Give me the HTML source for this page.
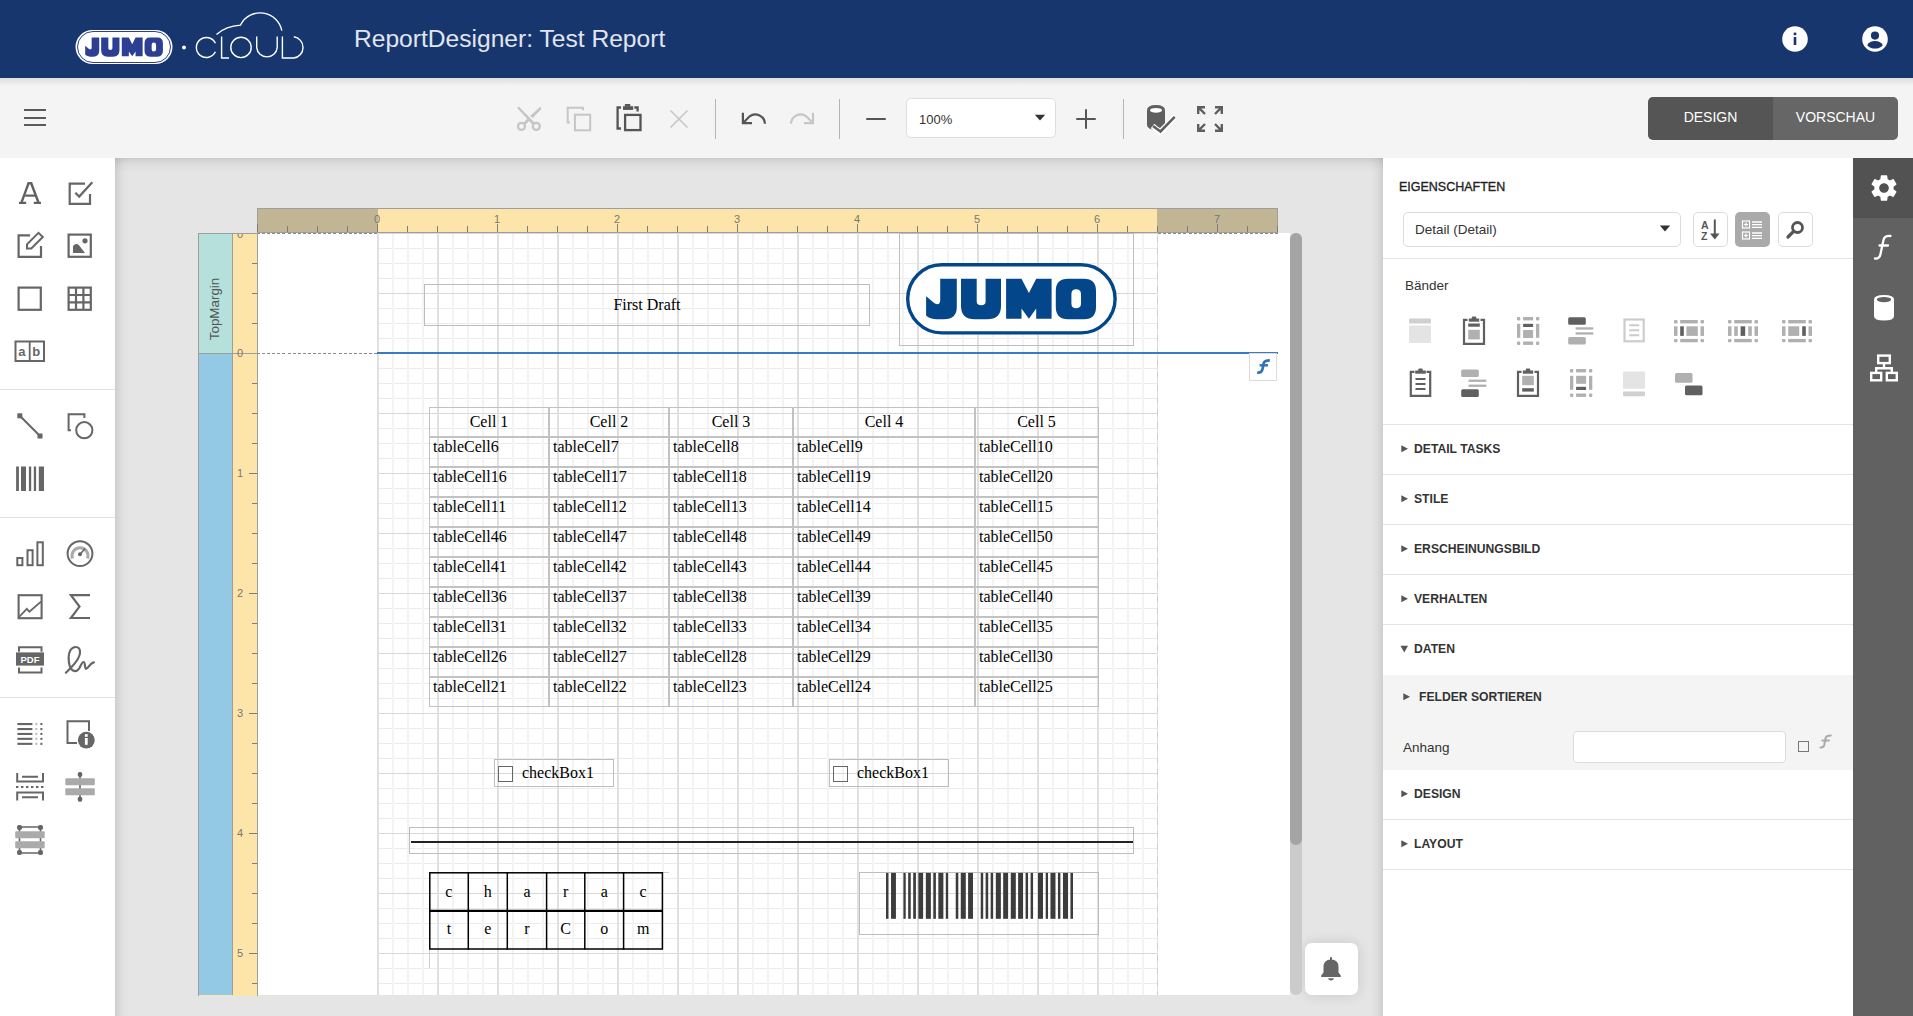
<!DOCTYPE html>
<html><head><meta charset="utf-8">
<style>
*{box-sizing:border-box;margin:0;padding:0}
html,body{width:1913px;height:1016px;overflow:hidden;background:#fff;font-family:"Liberation Sans",sans-serif}
.a{position:absolute}
svg{position:absolute;overflow:visible}
#hdr{left:0;top:0;width:1913px;height:78px;background:#18366e}
#tb{left:0;top:78px;width:1913px;height:80px;background:#f4f4f4}
#tbsh{left:0;top:78px;width:1913px;height:8px;background:linear-gradient(#dedede,#f4f4f4)}
#lt{left:0;top:158px;width:115px;height:858px;background:#fff}
#cv{left:115px;top:158px;width:1268px;height:858px;background:#e5e5e5;overflow:hidden}
#rp{left:1383px;top:158px;width:470px;height:858px;background:#fff}
#rs{left:1853px;top:158px;width:60px;height:858px;background:#616161}
.title{left:354px;top:25px;font-size:24.6px;color:#e1e6ef;white-space:nowrap}
.sep{background:#b4b4b4;width:1px;height:40px;top:99px}
.lsep{left:0;width:115px;height:1px;background:#e2e2e2}
.btn{top:97px;height:43px;color:#fff;font-size:14px;text-align:center;line-height:41px}

.tk{width:1px;background:#7d7d7d}
.vtk{height:1px;background:#7d7d7d}
.rn{width:20px;text-align:center;font-size:11px;color:#777;line-height:14px}
.grid{background-image:linear-gradient(90deg,#e0e0e0 2px,transparent 2px),linear-gradient(#d8d8d8 1px,transparent 1px),linear-gradient(90deg,#f3f3f3 2px,transparent 2px),linear-gradient(#ebebeb 1px,transparent 1px);background-size:60px 60px,60px 60px,15px 15px,15px 15px}

.ctl{border:1px solid #bdbdbd}
.ser{font-family:"Liberation Serif",serif;font-size:16px;color:#000;white-space:nowrap;line-height:18px}
.cell{border:1px solid #c2c2c2}

.sec{font-size:13.5px;font-weight:bold;color:#333;transform:scaleX(0.9);transform-origin:0 0}
.dsh{height:1px;background:repeating-linear-gradient(90deg,#8a8a8a 0 3px,transparent 3px 5.1px)}
</style></head><body>
<div id="hdr" class="a"></div>
<!-- JUMO header logo -->
<svg style="left:75px;top:29px" width="98" height="36" viewBox="0 0 98 36">
  <rect x="0.5" y="1" width="97" height="34" rx="17" fill="#fff"/>
  <rect x="2.5" y="2.5" width="93" height="31" rx="15.5" fill="#fff" stroke="#2c3f93" stroke-width="1"/>
  <g transform="translate(1,1) scale(0.4575,0.4735)" fill="#2c3f93"><path id="jumoL" d="M34.2,15.7H50.8V44Q50.8,56.3 38,56.3H31Q24,56.3 20.1,52.5V33.3L28.5,40.3Q34.2,43 34.2,37Z M55,15.7H70.7V38.5Q70.7,42.3 75.2,42.3Q79.6,42.3 79.6,38.5V15.7H95V43Q95,56.3 81,56.3H69Q55,56.3 55,43Z M100.1,15.7H115.5L122.9,30.1L130.2,15.7H145.6V55.7H130.2V45.4L122.9,55.7L115.5,45.4V55.7H100.1Z M162,15.7H178Q190,15.7 190,28V44Q190,56.3 178,56.3H162Q149.8,56.3 149.8,44V28Q149.8,15.7 162,15.7Z M170,26.2Q165.4,26.2 165.4,31V40.5Q165.4,45.2 170,45.2Q175,45.2 175,40.5V31Q175,26.2 170,26.2Z" fill-rule="evenodd"/></g>
</svg>
<svg style="left:0;top:0" width="320" height="78" viewBox="0 0 320 78" fill="none" stroke="#fff" stroke-width="1.4">
  <circle cx="184" cy="47.5" r="2" fill="#fff" stroke="none"/>
  <path d="M215.4,43.2A10,10 0 1 0 215.4,51.8"/>
  <path d="M221.6,36.6V58H229"/>
  <circle cx="241" cy="47.4" r="10.2"/>
  <path d="M256.7,36.6V47.6A10.3,10.3 0 0 0 277.2,47.6V36.6"/>
  <path d="M282.4,36.6V58H293.8A10.7,10.7 0 0 0 293.8,36.8"/>
  <path d="M216.5,34.4Q226,26 240.5,25.1L240.8,24.5A22,22 0 0 1 281.8,30.6"/>
</svg>
<div class="a title">ReportDesigner: Test Report</div>
<!-- header right icons -->
<svg style="left:1782px;top:26px" width="26" height="26" viewBox="0 0 26 26">
  <circle cx="13" cy="13" r="12.8" fill="#fff"/>
  <rect x="11.7" y="11" width="2.6" height="8" fill="#1a356e"/>
  <rect x="11.7" y="6.6" width="2.6" height="2.6" fill="#1a356e"/>
</svg>
<svg style="left:1862px;top:26px" width="26" height="26" viewBox="0 0 26 26">
  <circle cx="13" cy="13" r="12.8" fill="#fff"/>
  <circle cx="13" cy="9.6" r="4.1" fill="#1a356e"/>
  <path d="M5.2,19.2Q7.5,15 13,15Q18.5,15 20.8,19.2Q18,22.6 13,22.6Q8,22.6 5.2,19.2Z" fill="#1a356e"/>
</svg>

<div id="tb" class="a"></div>
<div id="tbsh" class="a"></div>
<!-- hamburger -->
<div class="a" style="left:24px;top:109px;width:22px;height:2.4px;background:#5a5a5a"></div>
<div class="a" style="left:24px;top:116.5px;width:22px;height:2.4px;background:#5a5a5a"></div>
<div class="a" style="left:24px;top:124px;width:22px;height:2.4px;background:#5a5a5a"></div>
<!-- toolbar icons -->
<svg style="left:516px;top:106px" width="26" height="26" viewBox="0 0 26 26">
  <circle cx="5.5" cy="20.4" r="3.5" fill="none" stroke="#c6c6c6" stroke-width="2.3"/><circle cx="20.3" cy="20.4" r="3.5" fill="none" stroke="#c6c6c6" stroke-width="2.3"/>
  <path d="M1,1.8L2.8,0.4L19.4,17.4L17.2,19.6Z M6.6,17.4L12,12L14,14L8.8,19.6Z M14.2,9.8L24.6,0.6L25.2,3.2L16.6,12.2Z" fill="#c6c6c6"/>
</svg>
<svg style="left:566px;top:106px" width="26" height="26" viewBox="0 0 26 26" fill="none" stroke="#c6c6c6" stroke-width="2">
  <path d="M4,16.5H1.7V1.7H17V4.3"/><rect x="8.9" y="8.7" width="15.3" height="15.6"/>
</svg>
<svg style="left:616px;top:103px" width="27" height="29" viewBox="0 0 27 29">
  <path d="M5,25.5H1.6V4.5H5" fill="none" stroke="#555" stroke-width="2.3"/>
  <rect x="7" y="3.2" width="10.2" height="3.7" fill="#555"/><rect x="8.8" y="1" width="5.6" height="2.6" rx="0.8" fill="#555"/>
  <path d="M18.3,4.5H21.6V8.4" fill="none" stroke="#555" stroke-width="2.3"/>
  <rect x="9.1" y="11.9" width="15.4" height="15.2" fill="none" stroke="#555" stroke-width="2.3"/>
</svg>
<svg style="left:669px;top:109px" width="20" height="20" viewBox="0 0 20 20" fill="none" stroke="#c6c6c6" stroke-width="1.6">
  <path d="M1.5,1.5L18.5,18.5M18.5,1.5L1.5,18.5"/>
</svg>
<div class="a sep" style="left:715px"></div>
<svg style="left:740px;top:111px" width="27" height="15" viewBox="0 0 27 15" fill="none" stroke="#555" stroke-width="2.2">
  <path d="M2.9,1.8V12.2H12"/><path d="M2.9,12.2L9.6,5.3A9.6,9.6 0 0 1 24.9,12.8"/>
</svg>
<svg style="left:789px;top:111px" width="27" height="15" viewBox="0 0 27 15" fill="none" stroke="#c6c6c6" stroke-width="2.2">
  <path d="M24,1.8V12.2H15"/><path d="M24,12.2L17.3,5.3A9.6,9.6 0 0 0 2,12.8"/>
</svg>
<div class="a sep" style="left:839px"></div>
<div class="a" style="left:866px;top:117.6px;width:20px;height:2.4px;background:#555;border-radius:1px"></div>
<div class="a" style="left:906px;top:98px;width:150px;height:40px;background:#fff;border:1px solid #dedede;border-radius:5px"></div>
<div class="a" style="left:919px;top:112px;font-size:13px;color:#333">100%</div>
<svg style="left:1034px;top:114px" width="12" height="8" viewBox="0 0 12 8"><path d="M0.8,0.8H11.2L6,6.5Z" fill="#333"/></svg>
<div class="a" style="left:1076px;top:117.6px;width:20px;height:2.4px;background:#555;border-radius:1px"></div>
<div class="a" style="left:1084.8px;top:108.8px;width:2.4px;height:20px;background:#555;border-radius:1px"></div>
<div class="a sep" style="left:1123px"></div>
<svg style="left:1146px;top:104px" width="32" height="30" viewBox="0 0 32 30">
  <path d="M1,6.5Q1,1 10,1Q19,1 19,6.5V19L14,24L7,21.5L12,26.5Q1,25.5 1,21Z" fill="#5f5f5f"/>
  <ellipse cx="10" cy="6.3" rx="6" ry="2.4" fill="#fff"/>
  <path d="M6.5,22L14.5,28.5L29,12.8" fill="none" stroke="#fff" stroke-width="5.5"/>
  <path d="M7,22L14.5,27.5L28.7,12.8" fill="none" stroke="#5f5f5f" stroke-width="2.6"/>
</svg>
<svg style="left:1197px;top:106px" width="26" height="26" viewBox="0 0 26 26" fill="none" stroke="#5f5f5f" stroke-width="2.4">
  <path d="M1.2,8V1.2H8M1.2,1.2L8,8"/><path d="M18,1.2H24.8V8M24.8,1.2L18,8"/>
  <path d="M1.2,18V24.8H8M1.2,24.8L8,18"/><path d="M18,24.8H24.8V18M24.8,24.8L18,18"/>
</svg>
<!-- design/preview -->
<div class="a btn" style="left:1648px;width:125px;background:#555;border-radius:5px 0 0 5px">DESIGN</div>
<div class="a btn" style="left:1773px;width:125px;background:#666;border-radius:0 5px 5px 0">VORSCHAU</div>

<div id="lt" class="a"></div>

<!-- LEFT TOOLBOX -->
<div class="a lsep" style="top:389px"></div>
<div class="a lsep" style="top:517px"></div>
<div class="a lsep" style="top:697px"></div>
<svg style="left:14px;top:176px" width="34" height="32" viewBox="14 176 34 32" fill="none" stroke="#616161" stroke-width="2.3">
<path d="M21.6,202.2L28.6,183.2M38.4,202.2L31.2,183.2" stroke-width="2.4"/><path d="M27.6,183.2H32.2" stroke-width="2.3"/><path d="M25.2,195.6H35" stroke-width="2.2"/><path d="M19,202.9H26.2M33.8,202.9H41" stroke-width="2.1"/></svg>
<svg style="left:68px;top:181px" width="26" height="24" viewBox="0 0 26 24" fill="none" stroke="#666" stroke-width="2.2">
  <path d="M22,13V22.8H1.7V2.6H17"/><path d="M7.3,11.8L11.2,15.6L24.3,1.2"/>
</svg>
<svg style="left:17px;top:231px" width="29" height="28" viewBox="0 0 29 28" fill="none" stroke="#666" stroke-width="2.2">
  <path d="M24,15V25.9H1.6V4.3H13"/><path d="M10,17.5V13.3L21.5,1.8L25.8,6L14.3,17.5Z" stroke-width="2"/>
</svg>
<svg style="left:67px;top:233px" width="26" height="26" viewBox="0 0 26 26">
  <rect x="1.6" y="1.6" width="22.2" height="22.2" fill="none" stroke="#666" stroke-width="2.2"/>
  <path d="M6,20H18L12,12.2Q9,9.5 6,13Z" fill="#666"/><circle cx="18" cy="7.8" r="2.6" fill="#666"/>
</svg>
<svg style="left:17px;top:286px" width="26" height="26" viewBox="0 0 26 26"><rect x="1.6" y="1.6" width="22.2" height="22.2" fill="none" stroke="#666" stroke-width="2.2"/></svg>
<svg style="left:67px;top:286px" width="26" height="26" viewBox="0 0 26 26" fill="none" stroke="#666" stroke-width="2.2">
  <rect x="1.6" y="1.6" width="22.2" height="22.2"/><path d="M9,1.6V23.8M16.4,1.6V23.8M1.6,9H23.8M1.6,16.4H23.8"/>
</svg>
<svg style="left:14px;top:340px" width="32" height="23" viewBox="0 0 32 23">
  <rect x="1.5" y="1.5" width="28.5" height="19.5" fill="none" stroke="#666" stroke-width="2"/><path d="M15.7,1.5V21" stroke="#666" stroke-width="1.8"/>
  <text x="4.3" y="16.3" font-family="Liberation Sans" font-weight="bold" font-size="13" fill="#666">a</text>
  <text x="18.2" y="16.3" font-family="Liberation Sans" font-weight="bold" font-size="13" fill="#666">b</text>
</svg>
<svg style="left:16px;top:413px" width="28" height="28" viewBox="0 0 28 28">
  <path d="M3.8,2.8L24,23" stroke="#666" stroke-width="2"/><rect x="1.3" y="0.3" width="5" height="5" fill="#666"/><rect x="21.5" y="20.5" width="5" height="5" fill="#666"/>
</svg>
<svg style="left:66px;top:412px" width="30" height="30" viewBox="0 0 30 30" fill="none" stroke="#666" stroke-width="2">
  <path d="M5,18.2H2.6V2.3H18.4V6"/><circle cx="18.3" cy="18.2" r="8.1"/>
</svg>
<svg style="left:16px;top:466px" width="29" height="26" viewBox="0 0 29 26" fill="#666">
  <rect x="0.1" y="0.5" width="2.8" height="24.5"/><rect x="5" y="0.5" width="5" height="24.5"/><rect x="12.9" y="0.5" width="2.3" height="24.5"/><rect x="17.8" y="0.5" width="2.3" height="24.5"/><rect x="22.8" y="0.5" width="5.2" height="24.5"/>
</svg>
<svg style="left:15px;top:540px" width="30" height="28" viewBox="0 0 30 28" fill="none" stroke="#666" stroke-width="2">
  <rect x="2.3" y="18" width="5.1" height="7.2"/><rect x="12.5" y="10.2" width="5.1" height="15"/><rect x="22.4" y="2.3" width="5.4" height="22.9"/>
</svg>
<svg style="left:65px;top:539px" width="30" height="30" viewBox="0 0 30 30">
  <circle cx="15" cy="14.6" r="12.4" fill="none" stroke="#666" stroke-width="2"/>
  <path d="M7.5,19.5A8,8 0 1 1 22.5,19.5" fill="none" stroke="#aaa" stroke-width="3"/>
  <circle cx="15" cy="15.3" r="2" fill="#666"/><path d="M15,15.3L20.2,9.5" stroke="#666" stroke-width="1.6"/>
</svg>
<svg style="left:16px;top:593px" width="28" height="28" viewBox="0 0 28 28" fill="none" stroke="#666" stroke-width="2">
  <rect x="2.6" y="2.2" width="23" height="23" stroke-width="2.1"/><path d="M2.6,24.5L10.8,15.8L13.4,18.8L25,8.6" stroke-width="1.8"/>
</svg>
<svg style="left:69px;top:594px" width="22" height="26" viewBox="0 0 22 26" fill="none" stroke="#666" stroke-width="2.2">
  <path d="M21,1.2H1.9L10.5,12.6L1.9,24H21" stroke-linejoin="miter"/>
</svg>
<svg style="left:15px;top:646px" width="30" height="28" viewBox="0 0 30 28">
  <path d="M4,5.8V1.2H26.5V5.8M4,21.6V26.6H26.5V21.6" fill="none" stroke="#666" stroke-width="2"/>
  <rect x="1" y="6.4" width="28" height="13.2" fill="#666"/>
  <text x="15" y="17" text-anchor="middle" font-family="Liberation Sans" font-weight="bold" font-size="9.5" fill="#fff">PDF</text>
</svg>
<svg style="left:60px;top:640px" width="40" height="40" viewBox="0 0 40 40" fill="none" stroke="#666" stroke-width="2.2" stroke-linecap="round">
  <path d="M5.9,32.7L10.8,27.8C14,24.5 19.5,19 20,13C20.3,8.5 18.5,7 15.8,7C11,7 8.5,12 8.6,18C8.7,24 10.5,29 13,30.5C16,32 18,30.5 19.5,28C21,25 22,22 23.6,22C25.5,22 24.5,28.5 26,28.8C28,29 30,23 33.9,22.3"/>
</svg>
<svg style="left:16px;top:722px" width="28" height="24" viewBox="0 0 28 24">
  <g fill="#666"><rect x="1.4" y="1" width="15" height="2.1"/><rect x="1.4" y="6" width="15" height="2.1"/><rect x="1.4" y="10.9" width="15" height="2.1"/><rect x="1.4" y="15.8" width="15" height="2.1"/><rect x="1.4" y="20.8" width="15" height="2.1"/>
  <rect x="24.4" y="1" width="2" height="2.1"/><rect x="24.4" y="6" width="2" height="2.1"/><rect x="24.4" y="10.9" width="2" height="2.1"/><rect x="24.4" y="15.8" width="2" height="2.1"/><rect x="24.4" y="20.8" width="2" height="2.1"/></g>
  <g fill="#bbb"><rect x="19.3" y="1" width="2" height="2.1"/><rect x="19.3" y="6" width="2" height="2.1"/><rect x="19.3" y="10.9" width="2" height="2.1"/><rect x="19.3" y="15.8" width="2" height="2.1"/><rect x="19.3" y="20.8" width="2" height="2.1"/></g>
</svg>
<svg style="left:65px;top:719px" width="32" height="32" viewBox="0 0 32 32">
  <path d="M12,24H2.5V2.3H24V12" fill="none" stroke="#666" stroke-width="2"/>
  <circle cx="21.3" cy="21.2" r="8.4" fill="#666"/>
  <rect x="19.9" y="19" width="2.8" height="6.8" fill="#fff"/><rect x="19.9" y="15.2" width="2.8" height="2.6" fill="#fff"/>
</svg>
<svg style="left:15px;top:772px" width="30" height="30" viewBox="0 0 30 30" fill="none" stroke="#666" stroke-width="2">
  <path d="M2.2,1V9.5H28V1M2.2,28.5V20.5H28V28.5"/><path d="M7,4.8H23M7,25.3H23"/>
  <path d="M1,15H29" stroke-dasharray="2.4,2.6" stroke-width="1.8"/>
</svg>
<svg style="left:64px;top:771px" width="32" height="32" viewBox="0 0 32 32">
  <path d="M16,3V29" stroke="#666" stroke-width="1.6"/><rect x="13.7" y="1" width="4.6" height="5" rx="2" fill="#666"/><rect x="13.7" y="25.8" width="4.6" height="5" rx="2" fill="#666"/>
  <rect x="1.3" y="7.2" width="29.5" height="7" rx="1" fill="#aaa"/><rect x="1.3" y="17.2" width="29.5" height="7" rx="1" fill="#aaa"/>
</svg>
<svg style="left:14px;top:824px" width="32" height="32" viewBox="0 0 32 32">
  <path d="M5.5,3V29M26.5,3V29M5.5,3H26.5M5.5,29H26.5" stroke="#666" stroke-width="1.6"/>
  <rect x="1.2" y="7.2" width="29.5" height="7" rx="1" fill="#aaa"/><rect x="1.2" y="17.2" width="29.5" height="7" rx="1" fill="#aaa"/>
  <rect x="3" y="1" width="5" height="5" rx="2" fill="#666"/><rect x="24" y="1" width="5" height="5" rx="2" fill="#666"/>
  <rect x="3" y="26" width="5" height="5" rx="2" fill="#666"/><rect x="24" y="26" width="5" height="5" rx="2" fill="#666"/>
</svg>
<div id="cv" class="a"></div>

<div class="a" id="cvsh" style="left:115px;top:158px;width:1268px;height:858px;box-shadow:inset 0 14px 14px -14px rgba(0,0,0,0.22),inset 14px 0 14px -14px rgba(0,0,0,0.2),inset -14px 0 14px -14px rgba(0,0,0,0.2)"></div>
<!-- page -->
<div class="a" style="left:257px;top:233px;width:1033px;height:762px;background:#fff"></div>
<div class="a grid" style="left:377px;top:233px;width:781px;height:120px"></div>
<div class="a grid" style="left:377px;top:353px;width:781px;height:642px"></div>
<div class="a" style="left:1157px;top:235.5px;width:1px;height:759.5px;background:repeating-linear-gradient(#cdcdcd 0 6px,transparent 6px 12.4px)"></div>
<div class="a dsh" style="left:257px;top:233px;width:120px"></div>
<div class="a dsh" style="left:1158px;top:233px;width:120px"></div>
<div class="a dsh" style="left:257px;top:353px;width:120px"></div>
<div class="a dsh" style="left:1158px;top:353px;width:120px"></div>
<div class="a" style="left:377px;top:352px;width:901px;height:1.5px;background:#3a7bbf"></div>
<!-- top ruler -->
<div class="a" style="left:257px;top:208px;width:1021px;height:25px;background:#c1b594;border:1px solid #9e9e9e"></div>
<div class="a" style="left:378px;top:209px;width:779px;height:23px;background:#fde5a9"></div>
<div class="a tk" style="left:257px;top:224px;height:8px"></div>
<div class="a tk" style="left:287px;top:226px;height:6px"></div>
<div class="a tk" style="left:317px;top:226px;height:6px"></div>
<div class="a tk" style="left:347px;top:226px;height:6px"></div>
<div class="a tk" style="left:377px;top:224px;height:8px"></div>
<div class="a tk" style="left:407px;top:226px;height:6px"></div>
<div class="a tk" style="left:437px;top:226px;height:6px"></div>
<div class="a tk" style="left:467px;top:226px;height:6px"></div>
<div class="a tk" style="left:497px;top:224px;height:8px"></div>
<div class="a tk" style="left:527px;top:226px;height:6px"></div>
<div class="a tk" style="left:557px;top:226px;height:6px"></div>
<div class="a tk" style="left:587px;top:226px;height:6px"></div>
<div class="a tk" style="left:617px;top:224px;height:8px"></div>
<div class="a tk" style="left:647px;top:226px;height:6px"></div>
<div class="a tk" style="left:677px;top:226px;height:6px"></div>
<div class="a tk" style="left:707px;top:226px;height:6px"></div>
<div class="a tk" style="left:737px;top:224px;height:8px"></div>
<div class="a tk" style="left:767px;top:226px;height:6px"></div>
<div class="a tk" style="left:797px;top:226px;height:6px"></div>
<div class="a tk" style="left:827px;top:226px;height:6px"></div>
<div class="a tk" style="left:857px;top:224px;height:8px"></div>
<div class="a tk" style="left:887px;top:226px;height:6px"></div>
<div class="a tk" style="left:917px;top:226px;height:6px"></div>
<div class="a tk" style="left:947px;top:226px;height:6px"></div>
<div class="a tk" style="left:977px;top:224px;height:8px"></div>
<div class="a tk" style="left:1007px;top:226px;height:6px"></div>
<div class="a tk" style="left:1037px;top:226px;height:6px"></div>
<div class="a tk" style="left:1067px;top:226px;height:6px"></div>
<div class="a tk" style="left:1097px;top:224px;height:8px"></div>
<div class="a tk" style="left:1127px;top:226px;height:6px"></div>
<div class="a tk" style="left:1157px;top:226px;height:6px"></div>
<div class="a tk" style="left:1187px;top:226px;height:6px"></div>
<div class="a tk" style="left:1217px;top:224px;height:8px"></div>
<div class="a tk" style="left:1247px;top:226px;height:6px"></div>
<div class="a tk" style="left:1277px;top:226px;height:6px"></div>
<div class="a rn" style="left:367px;top:212px">0</div>
<div class="a rn" style="left:487px;top:212px">1</div>
<div class="a rn" style="left:607px;top:212px">2</div>
<div class="a rn" style="left:727px;top:212px">3</div>
<div class="a rn" style="left:847px;top:212px">4</div>
<div class="a rn" style="left:967px;top:212px">5</div>
<div class="a rn" style="left:1087px;top:212px">6</div>
<div class="a rn" style="left:1207px;top:212px">7</div>
<!-- band strip -->
<div class="a" style="left:198px;top:233px;width:60px;height:763px;background:#fde5a9;border:1px solid #9e9e9e;border-bottom:none"></div>
<div class="a" style="left:199px;top:234px;width:34px;height:119px;background:#b5e0dc;border-right:1px solid #9e9e9e"></div>
<div class="a" style="left:199px;top:353px;width:34px;height:642px;background:#94c9e6;border-right:1px solid #9e9e9e;border-top:1px solid #9e9e9e"></div>
<div class="a" style="left:232px;top:353px;width:25px;height:1px;background:#9e9e9e"></div>
<div class="a" style="left:155px;top:301px;width:120px;height:16px;transform:rotate(-90deg);font-size:13.4px;color:#555;text-align:center;line-height:16px">TopMargin</div>
<div class="a vtk" style="top:263px;left:252px;width:5px"></div>
<div class="a vtk" style="top:293px;left:252px;width:5px"></div>
<div class="a vtk" style="top:323px;left:252px;width:5px"></div>
<div class="a vtk" style="top:383px;left:252px;width:5px"></div>
<div class="a vtk" style="top:413px;left:252px;width:5px"></div>
<div class="a vtk" style="top:443px;left:252px;width:5px"></div>
<div class="a vtk" style="top:473px;left:249px;width:8px"></div>
<div class="a vtk" style="top:503px;left:252px;width:5px"></div>
<div class="a vtk" style="top:533px;left:252px;width:5px"></div>
<div class="a vtk" style="top:563px;left:252px;width:5px"></div>
<div class="a vtk" style="top:593px;left:249px;width:8px"></div>
<div class="a vtk" style="top:623px;left:252px;width:5px"></div>
<div class="a vtk" style="top:653px;left:252px;width:5px"></div>
<div class="a vtk" style="top:683px;left:252px;width:5px"></div>
<div class="a vtk" style="top:713px;left:249px;width:8px"></div>
<div class="a vtk" style="top:743px;left:252px;width:5px"></div>
<div class="a vtk" style="top:773px;left:252px;width:5px"></div>
<div class="a vtk" style="top:803px;left:252px;width:5px"></div>
<div class="a vtk" style="top:833px;left:249px;width:8px"></div>
<div class="a vtk" style="top:863px;left:252px;width:5px"></div>
<div class="a vtk" style="top:893px;left:252px;width:5px"></div>
<div class="a vtk" style="top:923px;left:252px;width:5px"></div>
<div class="a vtk" style="top:953px;left:249px;width:8px"></div>
<div class="a vtk" style="top:983px;left:252px;width:5px"></div>
<div class="a rn" style="left:230px;top:466px">1</div>
<div class="a rn" style="left:230px;top:586px">2</div>
<div class="a rn" style="left:230px;top:706px">3</div>
<div class="a rn" style="left:230px;top:826px">4</div>
<div class="a rn" style="left:230px;top:946px">5</div>
<div class="a rn" style="left:230px;top:234px;height:6px;overflow:hidden;line-height:14px"><span style="position:relative;top:-7.5px">0</span></div>
<div class="a rn" style="left:230px;top:346px">0</div>
<div class="a ctl" style="left:424px;top:284px;width:446px;height:42px"></div>
<div class="a ser" style="left:424px;top:296px;width:446px;text-align:center">First Draft</div>
<div class="a ctl" style="left:899px;top:233px;width:235px;height:113px"></div>
<svg style="left:906px;top:262.5px" width="211" height="72" viewBox="0 0 211 72">
<rect x="1.7" y="1.7" width="207.4" height="68.2" rx="34.1" fill="#fff" stroke="#03478a" stroke-width="3.4"/>
<path fill="#03478a" fill-rule="evenodd" d="M34.2,15.7H50.8V44Q50.8,56.3 38,56.3H31Q24,56.3 20.1,52.5V33.3L28.5,40.3Q34.2,43 34.2,37Z M55,15.7H70.7V38.5Q70.7,42.3 75.2,42.3Q79.6,42.3 79.6,38.5V15.7H95V43Q95,56.3 81,56.3H69Q55,56.3 55,43Z M100.1,15.7H115.5L122.9,30.1L130.2,15.7H145.6V55.7H130.2V45.4L122.9,55.7L115.5,45.4V55.7H100.1Z M162,15.7H178Q190,15.7 190,28V44Q190,56.3 178,56.3H162Q149.8,56.3 149.8,44V28Q149.8,15.7 162,15.7Z M170,26.2Q165.4,26.2 165.4,31V40.5Q165.4,45.2 170,45.2Q175,45.2 175,40.5V31Q175,26.2 170,26.2Z"/>
</svg>
<div class="a" style="left:1249px;top:353px;width:28px;height:28px;border:1px solid #dcdcdc;background:#fff"></div>
<svg style="left:1255px;top:358px" width="17" height="17" viewBox="0 0 17 17" fill="none" stroke="#2f73b5" stroke-width="2.7">
<path d="M2.2,14.6Q6.6,15 7.4,11.5L8.7,5.2Q9.4,2.3 14.8,2.3"/><path d="M4.6,7.3H13" stroke-width="2.4"/></svg>
<div class="a cell" style="left:429px;top:407px;width:120px;height:30px"></div>
<div class="a ser" style="left:429px;top:413px;width:120px;text-align:center">Cell 1</div>
<div class="a cell" style="left:549px;top:407px;width:120px;height:30px"></div>
<div class="a ser" style="left:549px;top:413px;width:120px;text-align:center">Cell 2</div>
<div class="a cell" style="left:669px;top:407px;width:124px;height:30px"></div>
<div class="a ser" style="left:669px;top:413px;width:124px;text-align:center">Cell 3</div>
<div class="a cell" style="left:793px;top:407px;width:182px;height:30px"></div>
<div class="a ser" style="left:793px;top:413px;width:182px;text-align:center">Cell 4</div>
<div class="a cell" style="left:975px;top:407px;width:124px;height:30px"></div>
<div class="a ser" style="left:975px;top:413px;width:123px;text-align:center">Cell 5</div>
<div class="a cell" style="left:429px;top:437px;width:120px;height:30px"></div>
<div class="a ser" style="left:433px;top:438px">tableCell6</div>
<div class="a cell" style="left:549px;top:437px;width:120px;height:30px"></div>
<div class="a ser" style="left:553px;top:438px">tableCell7</div>
<div class="a cell" style="left:669px;top:437px;width:124px;height:30px"></div>
<div class="a ser" style="left:673px;top:438px">tableCell8</div>
<div class="a cell" style="left:793px;top:437px;width:182px;height:30px"></div>
<div class="a ser" style="left:797px;top:438px">tableCell9</div>
<div class="a cell" style="left:975px;top:437px;width:124px;height:30px"></div>
<div class="a ser" style="left:979px;top:438px">tableCell10</div>
<div class="a cell" style="left:429px;top:467px;width:120px;height:30px"></div>
<div class="a ser" style="left:433px;top:468px">tableCell16</div>
<div class="a cell" style="left:549px;top:467px;width:120px;height:30px"></div>
<div class="a ser" style="left:553px;top:468px">tableCell17</div>
<div class="a cell" style="left:669px;top:467px;width:124px;height:30px"></div>
<div class="a ser" style="left:673px;top:468px">tableCell18</div>
<div class="a cell" style="left:793px;top:467px;width:182px;height:30px"></div>
<div class="a ser" style="left:797px;top:468px">tableCell19</div>
<div class="a cell" style="left:975px;top:467px;width:124px;height:30px"></div>
<div class="a ser" style="left:979px;top:468px">tableCell20</div>
<div class="a cell" style="left:429px;top:497px;width:120px;height:30px"></div>
<div class="a ser" style="left:433px;top:498px">tableCell11</div>
<div class="a cell" style="left:549px;top:497px;width:120px;height:30px"></div>
<div class="a ser" style="left:553px;top:498px">tableCell12</div>
<div class="a cell" style="left:669px;top:497px;width:124px;height:30px"></div>
<div class="a ser" style="left:673px;top:498px">tableCell13</div>
<div class="a cell" style="left:793px;top:497px;width:182px;height:30px"></div>
<div class="a ser" style="left:797px;top:498px">tableCell14</div>
<div class="a cell" style="left:975px;top:497px;width:124px;height:30px"></div>
<div class="a ser" style="left:979px;top:498px">tableCell15</div>
<div class="a cell" style="left:429px;top:527px;width:120px;height:30px"></div>
<div class="a ser" style="left:433px;top:528px">tableCell46</div>
<div class="a cell" style="left:549px;top:527px;width:120px;height:30px"></div>
<div class="a ser" style="left:553px;top:528px">tableCell47</div>
<div class="a cell" style="left:669px;top:527px;width:124px;height:30px"></div>
<div class="a ser" style="left:673px;top:528px">tableCell48</div>
<div class="a cell" style="left:793px;top:527px;width:182px;height:30px"></div>
<div class="a ser" style="left:797px;top:528px">tableCell49</div>
<div class="a cell" style="left:975px;top:527px;width:124px;height:30px"></div>
<div class="a ser" style="left:979px;top:528px">tableCell50</div>
<div class="a cell" style="left:429px;top:557px;width:120px;height:30px"></div>
<div class="a ser" style="left:433px;top:558px">tableCell41</div>
<div class="a cell" style="left:549px;top:557px;width:120px;height:30px"></div>
<div class="a ser" style="left:553px;top:558px">tableCell42</div>
<div class="a cell" style="left:669px;top:557px;width:124px;height:30px"></div>
<div class="a ser" style="left:673px;top:558px">tableCell43</div>
<div class="a cell" style="left:793px;top:557px;width:182px;height:30px"></div>
<div class="a ser" style="left:797px;top:558px">tableCell44</div>
<div class="a cell" style="left:975px;top:557px;width:124px;height:30px"></div>
<div class="a ser" style="left:979px;top:558px">tableCell45</div>
<div class="a cell" style="left:429px;top:587px;width:120px;height:30px"></div>
<div class="a ser" style="left:433px;top:588px">tableCell36</div>
<div class="a cell" style="left:549px;top:587px;width:120px;height:30px"></div>
<div class="a ser" style="left:553px;top:588px">tableCell37</div>
<div class="a cell" style="left:669px;top:587px;width:124px;height:30px"></div>
<div class="a ser" style="left:673px;top:588px">tableCell38</div>
<div class="a cell" style="left:793px;top:587px;width:182px;height:30px"></div>
<div class="a ser" style="left:797px;top:588px">tableCell39</div>
<div class="a cell" style="left:975px;top:587px;width:124px;height:30px"></div>
<div class="a ser" style="left:979px;top:588px">tableCell40</div>
<div class="a cell" style="left:429px;top:617px;width:120px;height:30px"></div>
<div class="a ser" style="left:433px;top:618px">tableCell31</div>
<div class="a cell" style="left:549px;top:617px;width:120px;height:30px"></div>
<div class="a ser" style="left:553px;top:618px">tableCell32</div>
<div class="a cell" style="left:669px;top:617px;width:124px;height:30px"></div>
<div class="a ser" style="left:673px;top:618px">tableCell33</div>
<div class="a cell" style="left:793px;top:617px;width:182px;height:30px"></div>
<div class="a ser" style="left:797px;top:618px">tableCell34</div>
<div class="a cell" style="left:975px;top:617px;width:124px;height:30px"></div>
<div class="a ser" style="left:979px;top:618px">tableCell35</div>
<div class="a cell" style="left:429px;top:647px;width:120px;height:30px"></div>
<div class="a ser" style="left:433px;top:648px">tableCell26</div>
<div class="a cell" style="left:549px;top:647px;width:120px;height:30px"></div>
<div class="a ser" style="left:553px;top:648px">tableCell27</div>
<div class="a cell" style="left:669px;top:647px;width:124px;height:30px"></div>
<div class="a ser" style="left:673px;top:648px">tableCell28</div>
<div class="a cell" style="left:793px;top:647px;width:182px;height:30px"></div>
<div class="a ser" style="left:797px;top:648px">tableCell29</div>
<div class="a cell" style="left:975px;top:647px;width:124px;height:30px"></div>
<div class="a ser" style="left:979px;top:648px">tableCell30</div>
<div class="a cell" style="left:429px;top:677px;width:120px;height:30px"></div>
<div class="a ser" style="left:433px;top:678px">tableCell21</div>
<div class="a cell" style="left:549px;top:677px;width:120px;height:30px"></div>
<div class="a ser" style="left:553px;top:678px">tableCell22</div>
<div class="a cell" style="left:669px;top:677px;width:124px;height:30px"></div>
<div class="a ser" style="left:673px;top:678px">tableCell23</div>
<div class="a cell" style="left:793px;top:677px;width:182px;height:30px"></div>
<div class="a ser" style="left:797px;top:678px">tableCell24</div>
<div class="a cell" style="left:975px;top:677px;width:124px;height:30px"></div>
<div class="a ser" style="left:979px;top:678px">tableCell25</div>
<div class="a ctl" style="left:494px;top:759px;width:120px;height:28px"></div>
<div class="a" style="left:498px;top:766px;width:15px;height:16px;border:1.5px solid #666"></div>
<div class="a ser" style="left:522px;top:764px">checkBox1</div>
<div class="a ctl" style="left:829px;top:759px;width:120px;height:28px"></div>
<div class="a" style="left:833px;top:766px;width:15px;height:16px;border:1.5px solid #666"></div>
<div class="a ser" style="left:857px;top:764px">checkBox1</div>
<div class="a ctl" style="left:409px;top:827px;width:725px;height:27px"></div>
<div class="a" style="left:411px;top:841px;width:722px;height:1.5px;background:#222"></div>
<div class="a" style="left:429px;top:872px;width:240px;height:1px;background:#ccc"></div>
<div class="a" style="left:429px;top:872px;width:1px;height:96px;background:#ccc"></div>
<svg style="left:0;top:0" width="1" height="1"></svg>
<svg style="left:420px;top:865px" width="260" height="95" viewBox="420 865 260 95" stroke="#000" stroke-width="1.5" fill="none"><rect x="429.8" y="872.8" width="232.6" height="76.2" stroke-width="1.5"/><path d="M468.3,872V949.6"/><path d="M507.3,872V949.6"/><path d="M546.6,872V949.6"/><path d="M584.8,872V949.6"/><path d="M623.6,872V949.6"/><path d="M429,910.8H663" stroke-width="2.2"/></svg>
<div class="a ser" style="left:429.5px;top:882.8px;width:38.8px;text-align:center">c</div>
<div class="a ser" style="left:468.3px;top:882.8px;width:39.0px;text-align:center">h</div>
<div class="a ser" style="left:507.3px;top:882.8px;width:39.3px;text-align:center">a</div>
<div class="a ser" style="left:546.6px;top:882.8px;width:38.2px;text-align:center">r</div>
<div class="a ser" style="left:584.8px;top:882.8px;width:38.8px;text-align:center">a</div>
<div class="a ser" style="left:623.6px;top:882.8px;width:39.1px;text-align:center">c</div>
<div class="a ser" style="left:429.5px;top:919.7px;width:38.8px;text-align:center">t</div>
<div class="a ser" style="left:468.3px;top:919.7px;width:39.0px;text-align:center">e</div>
<div class="a ser" style="left:507.3px;top:919.7px;width:39.3px;text-align:center">r</div>
<div class="a ser" style="left:546.6px;top:919.7px;width:38.2px;text-align:center">C</div>
<div class="a ser" style="left:584.8px;top:919.7px;width:38.8px;text-align:center">o</div>
<div class="a ser" style="left:623.6px;top:919.7px;width:39.1px;text-align:center">m</div>
<div class="a ctl" style="left:859px;top:872px;width:240px;height:63px"></div>
<svg style="left:850px;top:862px" width="260" height="83" viewBox="0 0 260 83" fill="#3c3c3c"><rect x="36.02" y="10.9" width="2.45" height="45.9"/><rect x="41.04" y="10.9" width="4.89" height="45.9"/><rect x="53.41" y="10.9" width="2.31" height="45.9"/><rect x="58.17" y="10.9" width="2.58" height="45.9"/><rect x="63.20" y="10.9" width="2.72" height="45.9"/><rect x="68.36" y="10.9" width="4.76" height="45.9"/><rect x="75.84" y="10.9" width="5.03" height="45.9"/><rect x="83.31" y="10.9" width="2.58" height="45.9"/><rect x="88.34" y="10.9" width="5.03" height="45.9"/><rect x="95.81" y="10.9" width="2.31" height="45.9"/><rect x="105.74" y="10.9" width="2.58" height="45.9"/><rect x="110.76" y="10.9" width="5.03" height="45.9"/><rect x="118.10" y="10.9" width="4.89" height="45.9"/><rect x="130.74" y="10.9" width="2.45" height="45.9"/><rect x="135.63" y="10.9" width="2.58" height="45.9"/><rect x="140.66" y="10.9" width="2.45" height="45.9"/><rect x="145.83" y="10.9" width="5.03" height="45.9"/><rect x="153.17" y="10.9" width="4.89" height="45.9"/><rect x="160.78" y="10.9" width="5.03" height="45.9"/><rect x="168.12" y="10.9" width="4.89" height="45.9"/><rect x="175.59" y="10.9" width="2.45" height="45.9"/><rect x="180.62" y="10.9" width="2.45" height="45.9"/><rect x="187.96" y="10.9" width="5.03" height="45.9"/><rect x="195.71" y="10.9" width="2.31" height="45.9"/><rect x="200.46" y="10.9" width="5.03" height="45.9"/><rect x="207.94" y="10.9" width="2.45" height="45.9"/><rect x="212.97" y="10.9" width="5.03" height="45.9"/><rect x="220.44" y="10.9" width="2.58" height="45.9"/></svg>
<div class="a" style="left:1305px;top:943px;width:53px;height:52px;background:#fff;border-radius:7px;box-shadow:0 0 14px rgba(0,0,0,0.13)"></div>
<svg style="left:1319px;top:956px" width="24" height="26" viewBox="0 0 24 26" fill="#666">
<rect x="11" y="1.2" width="2" height="3"/><path d="M2.2,19.5L4.5,16.5V11Q4.5,3.5 12,3.5Q19.5,3.5 19.5,11V16.5L21.8,19.5V21H2.2Z"/><path d="M9,22.2H15Q14.5,24.5 12,24.5Q9.5,24.5 9,22.2Z"/></svg>
<!-- scrollbar -->
<div class="a" style="left:1290px;top:233px;width:12px;height:762px;background:#cbcbcb;border-radius:6px"></div>
<div class="a" style="left:1290px;top:233px;width:12px;height:612px;background:#a4a4a4;border-radius:6px"></div>
<div id="rp" class="a"></div>
<div id="rs" class="a"></div>
<div class="a" style="left:1399px;top:179px;font-size:13.5px;color:#222;-webkit-text-stroke:0.35px #222;transform:scaleX(0.925);transform-origin:0 0">EIGENSCHAFTEN</div>
<div class="a" style="left:1403px;top:212px;width:278px;height:35px;border:1px solid #dcdcdc;border-radius:5px"></div>
<div class="a" style="left:1415px;top:222px;font-size:13.5px;color:#333">Detail (Detail)</div>
<svg style="left:1659px;top:225px" width="12" height="7" viewBox="0 0 12 7"><path d="M0.8,0.5H11.2L6,6.5Z" fill="#333"/></svg>
<div class="a" style="left:1693px;top:212px;width:35px;height:35px;border:1px solid #dcdcdc;border-radius:5px"></div>
<svg style="left:1698px;top:217px" width="26" height="26" viewBox="0 0 26 26">
<text x="3" y="12" font-family="Liberation Sans" font-weight="bold" font-size="10.5" fill="#555">A</text>
<text x="3" y="23" font-family="Liberation Sans" font-weight="bold" font-size="10.5" fill="#555">Z</text>
<path d="M16.8,2.5V21" stroke="#555" stroke-width="2"/><path d="M12,16.5L16.8,22.5L21.6,16.5Z" fill="#555"/></svg>
<div class="a" style="left:1735px;top:212px;width:35px;height:35px;background:#aaa;border-radius:5px"></div>
<svg style="left:1740px;top:217px" width="26" height="26" viewBox="0 0 26 26" fill="none" stroke="#fff" stroke-width="1.2">
<rect x="2.5" y="4" width="7" height="7"/><rect x="2.5" y="15" width="7" height="7"/>
<path d="M6,5.5V9.5M4,7.5H8M6,16.5V20.5M4,18.5H8" /><path d="M12,5H22M12,7.7H22M12,10.4H22M12,16H22M12,18.7H22M12,21.4H22" stroke-width="1.3"/></svg>
<div class="a" style="left:1778px;top:212px;width:35px;height:35px;border:1px solid #dcdcdc;border-radius:5px"></div>
<svg style="left:1784px;top:218px" width="24" height="24" viewBox="0 0 24 24">
<circle cx="13.5" cy="9.5" r="5" fill="none" stroke="#555" stroke-width="2.8"/><path d="M9.8,13.2L4,19" stroke="#555" stroke-width="3.2" stroke-linecap="round"/></svg>
<div class="a" style="left:1383px;top:258px;width:470px;height:1px;background:#e4e4e4"></div>
<div class="a" style="left:1405px;top:278px;font-size:13.5px;color:#333">Bänder</div>
<svg style="left:1409px;top:318px" width="23" height="26" viewBox="0 0 23 26"><rect x="0" y="0.6" width="22" height="4.8" rx="1" fill="#d0d0d0"/><rect x="0" y="7.6" width="22" height="17.4" rx="1" fill="#e4e4e4"/></svg>
<svg style="left:1462px;top:316px" width="24" height="30" viewBox="0 0 24 30"><path d="M5.5,3.8H2V27.8H22V3.8H18.5" fill="none" stroke="#606060" stroke-width="2.2"/><rect x="6.8" y="2.5" width="10.4" height="3.2" fill="#606060"/><rect x="9.8" y="0.5" width="4.4" height="3" rx="1" fill="#606060"/><rect x="6.2" y="7.5" width="11.6" height="3.2" fill="#606060"/><rect x="6.2" y="13.8" width="11.6" height="9.6" fill="#b0b0b0"/></svg>
<svg style="left:1517px;top:317px" width="24" height="30" viewBox="0 0 24 30"><g fill="#b0b0b0"><rect x="0" y="0" width="3.3" height="3.4" rx="1"/><rect x="6.1" y="0" width="10" height="3.4"/><rect x="19" y="0" width="3.3" height="3.4" rx="1"/><rect x="0" y="6.8" width="3.3" height="14" /><rect x="19" y="6.8" width="3.3" height="14"/><rect x="0" y="24.5" width="3.3" height="3.4" rx="1"/><rect x="6.1" y="24.5" width="10" height="3.4"/><rect x="19" y="24.5" width="3.3" height="3.4" rx="1"/></g><rect x="6.1" y="6.8" width="10" height="3.2" fill="#606060"/><rect x="6.1" y="13" width="10" height="8" fill="#b0b0b0"/></svg>
<svg style="left:1568px;top:317px" width="27" height="30" viewBox="0 0 27 30"><rect x="0.2" y="0.2" width="17.6" height="7.6" rx="1.5" fill="#606060"/><rect x="7.6" y="10.3" width="17.7" height="2.3" fill="#b0b0b0"/><rect x="7.6" y="15.3" width="17.7" height="2.3" fill="#b0b0b0"/><rect x="0.2" y="20" width="17.6" height="7.6" rx="1.5" fill="#b0b0b0"/></svg>
<svg style="left:1623px;top:318px" width="24" height="26" viewBox="0 0 24 26"><rect x="1.5" y="1.5" width="19.2" height="21.8" fill="none" stroke="#cccccc" stroke-width="2.2"/><path d="M6.2,7.2H16.2M6.2,12.2H16.2M6.2,17.2H16.2" stroke="#cccccc" stroke-width="2"/></svg>
<svg style="left:1674px;top:320px" width="31" height="24" viewBox="0 0 31 24"><g fill="#b0b0b0"><rect x="0" y="0" width="3.5" height="3.4" rx="1"/><rect x="6.2" y="0" width="17.6" height="3.4"/><rect x="26.5" y="0" width="3.5" height="3.4" rx="1"/><rect x="0" y="6.3" width="3.5" height="9.6"/><rect x="26.5" y="6.3" width="3.5" height="9.6"/><rect x="0" y="18.9" width="3.5" height="3.4" rx="1"/><rect x="6.2" y="18.9" width="17.6" height="3.4"/><rect x="26.5" y="18.9" width="3.5" height="3.4" rx="1"/></g><rect x="6.2" y="6.3" width="3.6" height="9.6" fill="#606060"/><rect x="12.4" y="6.3" width="11.4" height="9.6" fill="#b0b0b0"/></svg>
<svg style="left:1728px;top:320px" width="31" height="24" viewBox="0 0 31 24"><g fill="#b0b0b0"><rect x="0" y="0" width="3.5" height="3.4" rx="1"/><rect x="6.2" y="0" width="17.6" height="3.4"/><rect x="26.5" y="0" width="3.5" height="3.4" rx="1"/><rect x="0" y="6.3" width="3.5" height="9.6"/><rect x="26.5" y="6.3" width="3.5" height="9.6"/><rect x="0" y="18.9" width="3.5" height="3.4" rx="1"/><rect x="6.2" y="18.9" width="17.6" height="3.4"/><rect x="26.5" y="18.9" width="3.5" height="3.4" rx="1"/></g><rect x="6.2" y="6.3" width="3.6" height="9.6" fill="#b0b0b0"/><rect x="12.6" y="6.3" width="4.6" height="9.6" fill="#606060"/><rect x="20.2" y="6.3" width="3.6" height="9.6" fill="#b0b0b0"/></svg>
<svg style="left:1782px;top:320px" width="31" height="24" viewBox="0 0 31 24"><g fill="#b0b0b0"><rect x="0" y="0" width="3.5" height="3.4" rx="1"/><rect x="6.2" y="0" width="17.6" height="3.4"/><rect x="26.5" y="0" width="3.5" height="3.4" rx="1"/><rect x="0" y="6.3" width="3.5" height="9.6"/><rect x="26.5" y="6.3" width="3.5" height="9.6"/><rect x="0" y="18.9" width="3.5" height="3.4" rx="1"/><rect x="6.2" y="18.9" width="17.6" height="3.4"/><rect x="26.5" y="18.9" width="3.5" height="3.4" rx="1"/></g><rect x="6.2" y="6.3" width="11" height="9.6" fill="#b0b0b0"/><rect x="20.2" y="6.3" width="3.6" height="9.6" fill="#606060"/></svg>
<svg style="left:1409px;top:368px" width="24" height="30" viewBox="0 0 24 30"><path d="M5.5,3.8H1.8V27.8H21.2V3.8H17.5" fill="none" stroke="#606060" stroke-width="2.2"/><rect x="6.2" y="2.5" width="10.6" height="3.2" fill="#606060"/><rect x="9.3" y="0.5" width="4.4" height="3" rx="1" fill="#606060"/><path d="M6.5,11H16.5M6.5,16H16.5M6.5,21H16.5" stroke="#606060" stroke-width="2.1"/></svg>
<svg style="left:1461px;top:369px" width="27" height="30" viewBox="0 0 27 30"><rect x="0.2" y="0.4" width="17.6" height="7.6" rx="1.5" fill="#b0b0b0"/><rect x="7.6" y="10.6" width="17.7" height="2.3" fill="#b0b0b0"/><rect x="7.6" y="15.6" width="17.7" height="2.3" fill="#b0b0b0"/><rect x="0.2" y="20.3" width="17.6" height="7.6" rx="1.5" fill="#606060"/></svg>
<svg style="left:1516px;top:368px" width="24" height="30" viewBox="0 0 24 30"><path d="M5.5,3.8H2V27.8H22V3.8H18.5" fill="none" stroke="#606060" stroke-width="2.2"/><rect x="6.8" y="2.5" width="10.4" height="3.2" fill="#606060"/><rect x="9.8" y="0.5" width="4.4" height="3" rx="1" fill="#606060"/><rect x="6.2" y="7.8" width="11.6" height="9.4" fill="#b0b0b0"/><rect x="6.2" y="20.2" width="11.6" height="3.4" fill="#606060"/></svg>
<svg style="left:1570px;top:369px" width="24" height="30" viewBox="0 0 24 30"><g fill="#b0b0b0"><rect x="0" y="0" width="3.3" height="3.4" rx="1"/><rect x="6.1" y="0" width="10" height="3.4"/><rect x="19" y="0" width="3.3" height="3.4" rx="1"/><rect x="0" y="6.8" width="3.3" height="14" /><rect x="19" y="6.8" width="3.3" height="14"/><rect x="0" y="24.5" width="3.3" height="3.4" rx="1"/><rect x="6.1" y="24.5" width="10" height="3.4"/><rect x="19" y="24.5" width="3.3" height="3.4" rx="1"/></g><rect x="6.1" y="6.8" width="10" height="8" fill="#b0b0b0"/><rect x="6.1" y="17.8" width="10" height="3.2" fill="#606060"/></svg>
<svg style="left:1623px;top:371px" width="24" height="27" viewBox="0 0 24 27"><rect x="0" y="0.5" width="22" height="17.2" rx="1" fill="#e4e4e4"/><rect x="0" y="20.4" width="22" height="4.8" rx="1" fill="#d0d0d0"/></svg>
<svg style="left:1675px;top:373px" width="28" height="24" viewBox="0 0 28 24"><rect x="0" y="0" width="17.5" height="9.7" rx="1.5" fill="#b0b0b0"/><rect x="10" y="12.5" width="17.5" height="9.7" rx="1.5" fill="#606060"/></svg>
<div class="a" style="left:1383px;top:424px;width:470px;height:1px;background:#e4e4e4"></div>
<svg style="left:1401px;top:445px" width="8" height="8" viewBox="0 0 8 8"><path d="M0.3,0.3L7,3.8L0.3,7.3Z" fill="#555"/></svg>
<div class="a sec" style="left:1414px;top:441px">DETAIL TASKS</div>
<div class="a" style="left:1383px;top:474px;width:470px;height:1px;background:#e4e4e4"></div>
<svg style="left:1401px;top:495px" width="8" height="8" viewBox="0 0 8 8"><path d="M0.3,0.3L7,3.8L0.3,7.3Z" fill="#555"/></svg>
<div class="a sec" style="left:1414px;top:491px">STILE</div>
<div class="a" style="left:1383px;top:524px;width:470px;height:1px;background:#e4e4e4"></div>
<svg style="left:1401px;top:545px" width="8" height="8" viewBox="0 0 8 8"><path d="M0.3,0.3L7,3.8L0.3,7.3Z" fill="#555"/></svg>
<div class="a sec" style="left:1414px;top:541px">ERSCHEINUNGSBILD</div>
<div class="a" style="left:1383px;top:574px;width:470px;height:1px;background:#e4e4e4"></div>
<svg style="left:1401px;top:595px" width="8" height="8" viewBox="0 0 8 8"><path d="M0.3,0.3L7,3.8L0.3,7.3Z" fill="#555"/></svg>
<div class="a sec" style="left:1414px;top:591px">VERHALTEN</div>
<div class="a" style="left:1383px;top:624px;width:470px;height:1px;background:#e4e4e4"></div>
<svg style="left:1400px;top:645px" width="9" height="8" viewBox="0 0 9 8"><path d="M0.5,0.8H8L4.25,7.5Z" fill="#555"/></svg>
<div class="a sec" style="left:1414px;top:641px">DATEN</div>
<div class="a" style="left:1383px;top:675px;width:470px;height:95px;background:#f4f4f4"></div>
<svg style="left:1403px;top:693px" width="8" height="8" viewBox="0 0 8 8"><path d="M0.3,0.3L7,3.8L0.3,7.3Z" fill="#555"/></svg>
<div class="a sec" style="left:1419px;top:689px">FELDER SORTIEREN</div>
<div class="a" style="left:1403px;top:740px;font-size:13.5px;color:#333">Anhang</div>
<div class="a" style="left:1573px;top:731px;width:213px;height:32px;background:#fff;border:1px solid #dcdcdc;border-radius:4px"></div>
<div class="a" style="left:1798px;top:741px;width:11px;height:11px;border:1px solid #777"></div>
<svg style="left:1819px;top:734px" width="14" height="15" viewBox="0 0 14 15" fill="none" stroke="#aaa" stroke-width="2" stroke-linecap="round">
<path d="M1.5,13.5Q4.5,13.8 5.2,11L6.6,4Q7.3,1.5 11.8,1.5"/><path d="M3.3,6.5H10"/></svg>
<svg style="left:1401px;top:790px" width="8" height="8" viewBox="0 0 8 8"><path d="M0.3,0.3L7,3.8L0.3,7.3Z" fill="#555"/></svg>
<div class="a sec" style="left:1414px;top:786px">DESIGN</div>
<div class="a" style="left:1383px;top:819px;width:470px;height:1px;background:#e4e4e4"></div>
<svg style="left:1401px;top:840px" width="8" height="8" viewBox="0 0 8 8"><path d="M0.3,0.3L7,3.8L0.3,7.3Z" fill="#555"/></svg>
<div class="a sec" style="left:1414px;top:836px">LAYOUT</div>
<div class="a" style="left:1383px;top:869px;width:470px;height:1px;background:#e4e4e4"></div>
<div class="a" style="left:1853px;top:158px;width:60px;height:60px;background:#525252"></div>
<svg style="left:1868px;top:172px" width="32" height="32" viewBox="0 0 24 24"><path fill="#fff" d="M19.14,12.94c.04-.3.06-.61.06-.94c0-.32-.02-.64-.07-.94l2.03-1.58c.18-.14.23-.41.12-.61l-1.92-3.32c-.12-.22-.37-.29-.59-.22l-2.39.96c-.5-.38-1.03-.7-1.62-.94L14.4,2.81c-.04-.24-.24-.41-.48-.41h-3.84c-.24,0-.43.17-.47.41L9.25,5.35C8.66,5.59,8.12,5.92,7.63,6.29L5.24,5.33c-.22-.08-.47,0-.59.22L2.74,8.87C2.62,9.08,2.66,9.34,2.86,9.48l2.03,1.58C4.84,11.36,4.8,11.69,4.8,12s.02.64.07.94l-2.03,1.58c-.18.14-.23.41-.12.61l1.92,3.32c.12.22.37.29.59.22l2.39-.96c.5.38,1.03.7,1.62.94l.36,2.54c.05.24.24.41.48.41h3.84c.24,0,.44-.17.47-.41l.36-2.54c.59-.24,1.13-.56,1.62-.94l2.39.96c.22.08.47,0,.59-.22l1.92-3.32c.12-.22.07-.47-.12-.61L19.14,12.94z M12,15.6c-1.98,0-3.6-1.62-3.6-3.6s1.62-3.6,3.6-3.6s3.6,1.62,3.6,3.6S13.98,15.6,12,15.6z"/></svg>
<svg style="left:1872px;top:233px" width="24" height="28" viewBox="0 0 24 28" fill="none" stroke="#fff" stroke-width="2.3" stroke-linecap="round">
<path d="M3,25.5Q7.5,26 8.5,21L11.5,7Q12.5,2.5 18.5,3"/><path d="M7.5,12.5H16"/></svg>
<svg style="left:1873px;top:294px" width="22" height="28" viewBox="0 0 22 28">
<path d="M1,5.5Q1,1 11,1Q21,1 21,5.5V22Q21,26.5 11,26.5Q1,26.5 1,22Z" fill="#fff"/><ellipse cx="11" cy="5.6" rx="7.2" ry="2.6" fill="#616161"/></svg>
<svg style="left:1869px;top:353px" width="30" height="32" viewBox="0 0 30 32" fill="none" stroke="#fff" stroke-width="2.4">
<rect x="9.2" y="2.6" width="11.6" height="7.5"/><rect x="2.2" y="19.9" width="10" height="7.4"/><rect x="17.8" y="19.9" width="10" height="7.4"/>
<path d="M15,10.1V15.2M7.2,19.9V15.2H22.8V19.9"/></svg>
</body></html>
